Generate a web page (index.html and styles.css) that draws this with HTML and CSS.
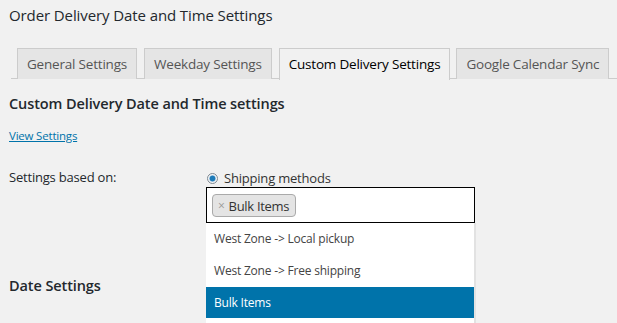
FILE: index.html
```html
<!DOCTYPE html>
<html>
<head>
<meta charset="utf-8">
<link rel="stylesheet" href="styles.css">
</head>
<body>
<div class="wrap">
  <h1 class="page-title">Order Delivery Date and Time Settings</h1>
  <nav class="tabs">
    <a class="tab">General Settings</a>
    <a class="tab">Weekday Settings</a>
    <a class="tab active">Custom Delivery Settings</a>
    <a class="tab">Google Calendar Sync</a>
  </nav>
  <h2 class="section-title">Custom Delivery Date and Time settings</h2>
  <a class="view-link" href="#">View Settings</a>
  <div class="row">
    <div class="label">Settings based on:</div>
    <div class="field">
      <label class="radio"><span class="radio-dot"></span>Shipping methods</label>
      <div class="select">
        <span class="chip"><span class="chip-x">×</span>Bulk Items</span>
        <ul class="dropdown">
          <li>West Zone -&gt; Local pickup</li>
          <li>West Zone -&gt; Free shipping</li>
          <li class="hl">Bulk Items</li>
          <li></li>
        </ul>
      </div>
    </div>
  </div>
  <h2 class="date-title">Date Settings</h2>
</div>
</body>
</html>
```
FILE: styles.css
```css
html, body {
  margin: 0;
  padding: 0;
  background: #f1f1f1;
  font-family: "Open Sans", "Noto Sans", sans-serif;
  color: #23282d;
}
.wrap {
  padding-left: 9px;
  height: 323px;
  overflow: hidden;
}
.page-title {
  margin: 0;
  padding-top: 4px;
  font-size: 15px;
  font-weight: 400;
  line-height: 22px;
  letter-spacing: -0.1px;
}
.tabs {
  display: flex;
  margin-top: 22px;
  margin-left: 2px;
  padding-left: 6px;
  border-bottom: 1px solid #ccc;
  height: 30px;
}
.tab {
  display: block;
  box-sizing: border-box;
  height: 31px;
  margin-right: 7px;
  padding: 0 9px;
  border: 1px solid #ccc;
  border-bottom: none;
  background: #e5e5e5;
  color: #555;
  font-size: 13.5px;
  font-weight: 500;
  line-height: 31px;
  letter-spacing: -0.2px;
  white-space: nowrap;
}
.tab.active {
  background: #f1f1f1;
  color: #000;
  height: 32px;
  margin-bottom: -1px;
  margin-right: 6px;
}
.section-title {
  margin: 14px 0 0;
  font-size: 14.5px;
  font-weight: 600;
  line-height: 22px;
  letter-spacing: -0.1px;
}
.view-link {
  display: inline-block;
  margin-top: 13px;
  font-size: 11.5px;
  line-height: 16px;
  color: #0073aa;
  text-decoration: underline;
  letter-spacing: -0.2px;
}
.row {
  display: flex;
  margin-top: 20px;
}
.label {
  width: 197px;
  font-size: 13px;
  line-height: 18px;
  padding-top: 3px;
  letter-spacing: -0.2px;
}
.field {
  width: 269px;
}
.radio {
  display: flex;
  align-items: center;
  height: 18px;
  margin-top: 4px;
  font-size: 13px;
  color: #333;
  letter-spacing: -0.2px;
}
.radio-dot {
  box-sizing: border-box;
  width: 11px;
  height: 11px;
  margin: 0 6px 0 1px;
  border-radius: 50%;
  border: 1px solid #7e8993;
  background: radial-gradient(circle, #1e7bb8 0 2.6px, #b8d4ea 3.2px, #f5f5f5 3.8px);
}
.select {
  position: relative;
  box-sizing: border-box;
  height: 36px;
  margin-top: 0;
  border: 1px solid #000;
  background: #fff;
  padding: 5px 0 0 5px;
}
.chip {
  display: inline-flex;
  align-items: center;
  box-sizing: border-box;
  height: 23px;
  padding: 0 6px 0 5px;
  background: #e4e4e4;
  border: 1px solid #aaa;
  border-radius: 4px;
  font-size: 13px;
  color: #333;
  letter-spacing: -0.3px;
}
.chip-x {
  color: #999;
  font-size: 12px;
  margin-right: 4px;
}
.dropdown {
  position: absolute;
  left: -1px;
  top: 35px;
  list-style: none;
  margin: 0;
  padding: 0;
  width: 268px;
  background: #fff;
  box-shadow: 2px 0 0 #e2e2e2;
  z-index: 2;
}
.dropdown li {
  height: 32px;
  line-height: 32px;
  padding-left: 8px;
  font-size: 12px;
  color: #444;
  letter-spacing: -0.2px;
}
.dropdown li.hl {
  background: #0073aa;
  color: #fff;
  height: 31px;
}
.date-title {
  margin: 52px 0 0;
  font-size: 14.5px;
  font-weight: 600;
  line-height: 22px;
  letter-spacing: -0.1px;
}
```
